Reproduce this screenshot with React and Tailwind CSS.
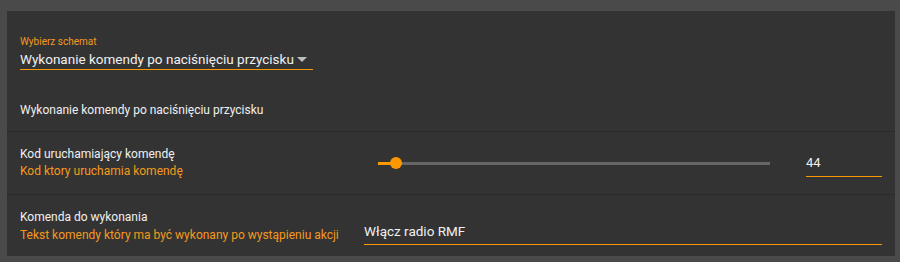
import { useState } from "react";

function SettingRow({ title, subtitle, rowClass, lineClass, rightClass, children }) {
  return (
    <div className={`flex items-center border-t border-[#2b2b2b] px-[13px] ${rowClass}`}>
      <div className="w-[344px] shrink-0 whitespace-nowrap">
        <div className={`text-[12px] text-[#f0f0f0] ${lineClass}`}>{title}</div>
        <div className={`text-[12px] text-[#f39a1c] ${lineClass}`}>{subtitle}</div>
      </div>
      <div className={`flex flex-1 self-stretch ${rightClass}`}>{children}</div>
    </div>
  );
}

export default function App() {
  const [code, setCode] = useState(44);
  const [command, setCommand] = useState("Włącz radio RMF");
  const pct = 4.6;

  return (
    <div className="h-[262px] w-[900px] bg-[#4a4a4a] pl-[7px] pr-[5px] pt-[11px] pb-[6px] font-['Roboto',sans-serif]">
      <div className="flex h-full flex-col bg-[#333333]">
        {/* Schema selector */}
        <div className="h-[120px] shrink-0 px-[13px] pt-[25px]">
          <div className="text-[10px] leading-[12px] text-[#f39a1c]">Wybierz schemat</div>
          <div className="mt-[2px] flex w-[293px] items-center border-b border-[#ff9800] pb-[1px]">
            <span className="whitespace-nowrap text-[13.5px] leading-[18px] text-[#f0f0f0]">
              Wykonanie komendy po naciśnięciu przycisku
            </span>
            <span className="ml-[3px] h-0 w-0 border-x-[5px] border-t-[5px] border-x-transparent border-t-[#bdbdbd]" />
          </div>
          <div className="mt-[32px] whitespace-nowrap text-[12px] leading-[16px] text-[#f0f0f0]">
            Wykonanie komendy po naciśnięciu przycisku
          </div>
        </div>

        {/* Trigger code */}
        <SettingRow
          title="Kod uruchamiający komendę"
          subtitle="Kod ktory uruchamia komendę"
          rowClass="h-[63px]"
          lineClass="leading-[17px]"
          rightClass="items-center"
        >
          <div className="relative ml-[14px] mr-[36px] h-[3px] flex-1 bg-[#666666]">
            <div className="absolute left-0 top-0 h-[3px] bg-[#ff9800]" style={{ width: `${pct}%` }} />
            <div
              className="absolute top-1/2 h-[12px] w-[12px] -translate-x-1/2 -translate-y-1/2 rounded-full bg-[#ff9800]"
              style={{ left: `${pct}%` }}
            />
          </div>
          <div className="w-[76px] border-b border-[#ff9800] pb-[2px]">
            <input
              value={code}
              onChange={(e) => setCode(e.target.value)}
              className="w-full bg-transparent text-[13px] leading-[18px] text-[#f0f0f0] outline-none"
            />
          </div>
        </SettingRow>

        {/* Command text */}
        <SettingRow
          title="Komenda do wykonania"
          subtitle="Tekst komendy który ma być wykonany po wystąpieniu akcji"
          rowClass="flex-1"
          lineClass="leading-[18px]"
          rightClass="items-end pb-[11px]"
        >
          <div className="w-full border-b border-[#ff9800] pb-[1px]">
            <input
              value={command}
              onChange={(e) => setCommand(e.target.value)}
              className="w-full bg-transparent text-[13.5px] leading-[18px] text-[#f0f0f0] outline-none"
            />
          </div>
        </SettingRow>
      </div>
    </div>
  );
}
